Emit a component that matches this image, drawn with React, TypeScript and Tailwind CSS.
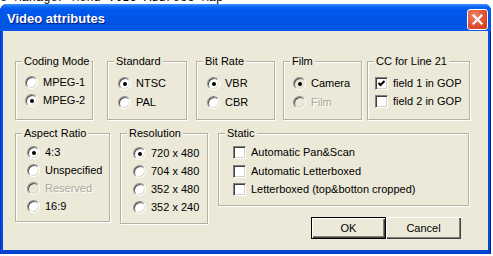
import React from "react";

const font = "font-['Liberation_Sans',Arial,sans-serif]";

const Radio: React.FC<{ checked?: boolean; disabled?: boolean }> = ({ checked, disabled }) => (
  <span
    className={`flex items-center justify-center w-[13px] h-[13px] shrink-0 rounded-full border border-t-[#8E8F8F] border-l-[#8E8F8F] border-b-white border-r-white shadow-[inset_1px_1px_0_#505050,inset_-1px_-1px_0_#DCD9CC] ${
      disabled ? "bg-[#ECE9D8]" : "bg-white"
    }`}
  >
    {checked && <span className="w-[4px] h-[4px] rounded-full bg-black" />}
  </span>
);

const Check: React.FC<{ checked?: boolean }> = ({ checked }) => (
  <span className="flex items-center justify-center w-[13px] h-[13px] shrink-0 bg-white border border-t-[#808080] border-l-[#808080] border-b-white border-r-white shadow-[inset_1px_1px_0_#404040,inset_-1px_-1px_0_#D4D0C8]">
    {checked && (
      <svg width="9" height="9" viewBox="0 0 9 9">
        <path d="M1.5 4 L3.5 6 L7.5 2" stroke="black" strokeWidth="2" fill="none" />
      </svg>
    )}
  </span>
);

interface Item {
  label: string;
  checked?: boolean;
  disabled?: boolean;
  greyText?: boolean;
}

const Group: React.FC<{
  title: string;
  className: string;
  items: Item[];
  kind: "radio" | "check";
  pad: string;
  top: string;
  gap?: string;
}> = ({ title, className, items, kind, pad, top, gap = "gap-[5px]" }) => (
  <div
    className={`flex flex-col border border-[#B4B1A2] shadow-[inset_1px_1px_0_#fff,1px_1px_0_#fff] shrink-0 ${className}`}
  >
    <span className="-mt-[7px] ml-[6px] px-[2px] h-[13px] leading-[13px] w-fit bg-[#ECE9D8]">{title}</span>
    <div className={`flex flex-col ${gap} ${top} ${pad}`}>
      {items.map((it) => (
        <div key={it.label} className="flex items-center h-[13px] gap-[5px]">
          {kind === "radio" ? <Radio checked={it.checked} disabled={it.disabled} /> : <Check checked={it.checked} />}
          <span
            className={`leading-[13px] whitespace-nowrap ${
              it.greyText ? "text-[#ACA899] [text-shadow:1px_1px_0_#fff]" : "text-black"
            }`}
          >
            {it.label}
          </span>
        </div>
      ))}
    </div>
  </div>
);

export default function App() {
  return (
    <div className={`w-[493px] h-[256px] bg-white overflow-hidden ${font}`}>
      <div className="h-[4px] overflow-hidden">
        <div className="font-['Liberation_Mono',monospace] text-[12px] leading-[14px] -mt-[9px] whitespace-nowrap text-black">
          e Manager Menu VOBU Address Map
        </div>
      </div>
      <div className="w-[491px] h-[250px] flex flex-col rounded-t-[7px] bg-[linear-gradient(180deg,#0058EE_0%,#0055E5_8%,#0052E0_90%,#0043CF_100%)] shadow-[inset_1px_0_0_#0831D9,inset_-1px_0_0_#001EA0]">
        <div className="h-[27px] shrink-0 flex items-center justify-between pl-[7px] pr-[3px] rounded-t-[7px] bg-[linear-gradient(180deg,#3D95FF_0px,#0A66F3_3px,#0058EE_6px,#0055E5_14px,#0054E3_22px,#0A59E8_27px)]">
          <span className="text-white font-bold text-[13px] leading-[16px] mt-[2px] [text-shadow:1px_1px_0_#0A1883]">
            Video attributes
          </span>
          <span className="w-[21px] h-[21px] mt-[3px] rounded-[3px] border border-white flex items-center justify-center bg-[radial-gradient(circle_at_35%_30%,#F08A6C_0%,#E2583E_45%,#C83513_100%)]">
            <svg width="11" height="11" viewBox="0 0 11 11">
              <path d="M1.5 1.5 L9.5 9.5 M9.5 1.5 L1.5 9.5" stroke="white" strokeWidth="2.2" strokeLinecap="square" />
            </svg>
          </span>
        </div>
        <div className="flex-1 mx-[3px] mb-[4px] bg-[#ECE9D8] text-[11px] text-black flex flex-col">
          <div className="flex mt-[30px] h-[59px]">
            <Group
              title="Coding Mode"
              className="ml-[12px] w-[78px] h-[59px]"
              kind="radio"
              pad="pl-[9px]"
              top="mt-[8px]"
              items={[{ label: "MPEG-1" }, { label: "MPEG-2", checked: true }]}
            />
            <Group
              title="Standard"
              className="ml-[14px] w-[80px] h-[59px]"
              kind="radio"
              pad="pl-[10px]"
              top="mt-[9px]"
              gap="gap-[6px]"
              items={[{ label: "NTSC", checked: true }, { label: "PAL" }]}
            />
            <Group
              title="Bit Rate"
              className="ml-[9px] w-[79px] h-[59px]"
              kind="radio"
              pad="pl-[10px]"
              top="mt-[9px]"
              gap="gap-[6px]"
              items={[{ label: "VBR", checked: true }, { label: "CBR" }]}
            />
            <Group
              title="Film"
              className="ml-[8px] w-[79px] h-[59px]"
              kind="radio"
              pad="pl-[9px]"
              top="mt-[9px]"
              gap="gap-[6px]"
              items={[
                { label: "Camera", checked: true, disabled: true },
                { label: "Film", disabled: true, greyText: true },
              ]}
            />
            <Group
              title="CC for Line 21"
              className="ml-[5px] w-[103px] h-[59px]"
              kind="check"
              pad="pl-[7px]"
              top="mt-[9px]"
              items={[{ label: "field 1 in GOP", checked: true }, { label: "field 2 in GOP" }]}
            />
          </div>
          <div className="flex mt-[13px] items-start">
            <Group
              title="Aspect Ratio"
              className="ml-[12px] w-[95px] h-[89px]"
              kind="radio"
              pad="pl-[11px]"
              top="mt-[6px]"
              items={[
                { label: "4:3", checked: true },
                { label: "Unspecified" },
                { label: "Reserved", disabled: true, greyText: true },
                { label: "16:9" },
              ]}
            />
            <Group
              title="Resolution"
              className="ml-[10px] w-[88px] h-[91px]"
              kind="radio"
              pad="pl-[12px]"
              top="mt-[7px]"
              items={[
                { label: "720 x 480", checked: true },
                { label: "704 x 480" },
                { label: "352 x 480" },
                { label: "352 x 240" },
              ]}
            />
            <div className="ml-[10px] w-[251px] flex flex-col">
              <Group
                title="Static"
                className="w-[251px] h-[73px]"
                kind="check"
                pad="pl-[14px]"
                top="mt-[6px]"
                gap="gap-[5.5px]"
                items={[
                  { label: "Automatic Pan&Scan" },
                  { label: "Automatic Letterboxed" },
                  { label: "Letterboxed (top&botton cropped)" },
                ]}
              />
              <div className="flex justify-end pr-[8px] mt-[11px]">
                <button className="w-[75px] h-[22px] border border-black bg-[#ECE9D8] shadow-[inset_1px_1px_0_#fff,inset_-1px_-1px_0_#404040,inset_-2px_-2px_0_#808080] text-[11px] leading-[13px]">
                  OK
                </button>
                <button className="w-[75px] h-[22px] bg-[#ECE9D8] shadow-[inset_1px_1px_0_#fff,inset_-1px_-1px_0_#404040,inset_-2px_-2px_0_#808080] text-[11px] leading-[13px]">
                  Cancel
                </button>
              </div>
            </div>
          </div>
        </div>
      </div>
    </div>
  );
}
